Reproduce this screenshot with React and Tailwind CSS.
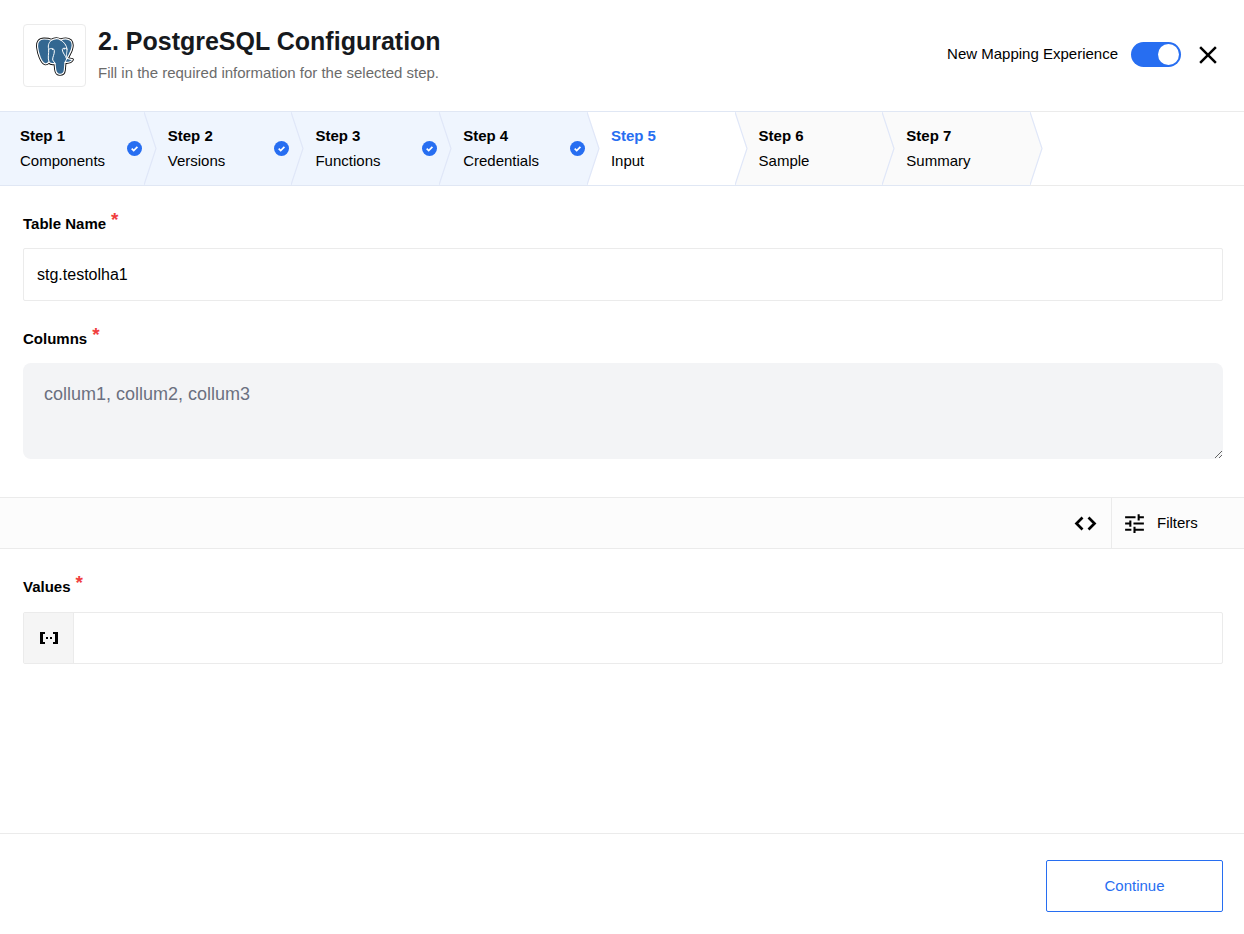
import React from "react";
import { MdClose, MdTune } from "react-icons/md";

const steps = [
  { title: "Step 1", name: "Components", state: "done" },
  { title: "Step 2", name: "Versions", state: "done" },
  { title: "Step 3", name: "Functions", state: "done" },
  { title: "Step 4", name: "Credentials", state: "done" },
  { title: "Step 5", name: "Input", state: "current" },
  { title: "Step 6", name: "Sample", state: "upcoming" },
  { title: "Step 7", name: "Summary", state: "upcoming" },
];

const stepStyles = {
  done: { box: "bg-[#eff5fe]", arrow: "fill-[#eff5fe]", title: "text-black" },
  current: { box: "bg-white", arrow: "fill-white", title: "text-[#276ef1]" },
  upcoming: { box: "bg-[#fafafa]", arrow: "fill-[#fafafa]", title: "text-black" },
};

const elephant =
  "M63 92C61 74 68 66 82 66C92 66 98 67 104 70C112 65 124 64 132 69C142 65 155 65 162 71C169 79 167 95 158 112L152 124C156 127 161 126 167 128C164 134 156 137 145 136L143 159C142 169 136 172 130 172C121 172 118 167 117 158L115 139C108 141 101 140 97 135C94 138 90 142 85 140C74 136 65 110 63 92Z";

function PostgresLogo() {
  return (
    <svg viewBox="55 57 120 120" className="size-10" aria-hidden="true">
      <path d={elephant} fill="none" stroke="#111" strokeWidth="9" strokeLinejoin="round" />
      <path d={elephant} fill="#336791" stroke="#fff" strokeWidth="3.500" strokeLinejoin="round" />
      <g fill="none" stroke="#fff" strokeWidth="3" strokeLinecap="round" strokeLinejoin="round">
        <path d="M104 70C94 78 94 88 96 98C97 110 92 122 97 135" />
        <path d="M96 97C104 92 112 94 113 101C114 112 107 120 108 129L115 139" />
        <path d="M132 69C142 74 150 86 151 96C152 106 146 112 152 124" />
        <path d="M151 96C144 92 137 93 137 98C137 107 147 116 150 126L145 136" />
      </g>
      <path d="M104 95l7 1-3 4zM139 95l7-1-3 4z" fill="#fff" />
    </svg>
  );
}

function CheckBadge() {
  return (
    <svg viewBox="0 0 15 15" className="size-[15px] shrink-0" aria-hidden="true">
      <circle cx="7.5" cy="7.5" r="7.5" fill="#276ef1" />
      <path d="M4.700 7.600l2 2 3.700-3.800" fill="none" stroke="#fff" strokeWidth="1.700" />
    </svg>
  );
}

function CodeIcon() {
  return (
    <svg viewBox="0 0 23 15" className="h-[15px] w-[23px]" aria-hidden="true">
      <path d="M8.500 1.500l-6 6 6 6M14.500 1.500l6 6-6 6" fill="none" stroke="#000" strokeWidth="2.700" />
    </svg>
  );
}

function Step({ title, name, state }) {
  const s = stepStyles[state];
  return (
    <li
      aria-current={state === "current" ? "step" : undefined}
      className={`relative flex min-w-0 flex-1 items-center justify-between border-y border-[#e0e7f4] pl-6 pr-[2px] ${s.box}`}
    >
      <div className="pb-[2px] leading-[25px]">
        <p className={`font-bold ${s.title}`}>{title}</p>
        <p>{name}</p>
      </div>
      {state === "done" && <CheckBadge />}
      <svg
        viewBox="0 0 13 73"
        preserveAspectRatio="none"
        className={`absolute left-full top-0 z-10 h-full w-[13px] ${s.arrow}`}
        aria-hidden="true"
      >
        <path d="M0 0L12 36.500L0 73" stroke="#e0e7f8" strokeWidth="1.200" />
      </svg>
    </li>
  );
}

function FieldLabel({ htmlFor, children }) {
  return (
    <label htmlFor={htmlFor} className="flex h-6 items-center gap-[5px] font-bold">
      {children}
      <span className="pb-2 text-[19px] leading-6 text-[#f03e3e]">*</span>
    </label>
  );
}

export default function App() {
  return (
    <div className="flex min-h-screen flex-col bg-white font-['Liberation_Sans',Arial,sans-serif] text-[15px] text-black">
      <header className="flex items-center justify-between pb-6 pl-[23px] pr-[21px] pt-6">
        <div className="flex items-center gap-3">
          <div className="flex size-[63px] items-center justify-center rounded-sm border border-[#ebebeb]">
            <PostgresLogo />
          </div>
          <div className="pb-[2px]">
            <h1 className="text-[25px] font-bold leading-8 text-[#16191d]">2. PostgreSQL Configuration</h1>
            <p className="mt-1 leading-6 text-[#6b6b6b]">Fill in the required information for the selected step.</p>
          </div>
        </div>
        <div className="flex items-center pb-[2px]">
          <label htmlFor="mapping">New Mapping Experience</label>
          <input
            id="mapping"
            type="checkbox"
            role="switch"
            defaultChecked
            className="ml-[13px] flex h-[25px] w-[50px] cursor-pointer appearance-none items-center rounded-full bg-[#c4c4c4] px-[2px] before:size-[21px] before:rounded-full before:bg-white checked:justify-end checked:bg-[#276ef1]"
          />
          <button type="button" aria-label="Close" className="ml-3">
            <MdClose size={30} className="block" />
          </button>
        </div>
      </header>

      <nav aria-label="Progress" className="flex h-[75px] overflow-hidden">
        <ol className="-ml-1 flex w-full max-w-[1034px]">
          {steps.map((step) => (
            <Step key={step.title} {...step} />
          ))}
        </ol>
        <div className="flex-1 border-y border-[#ebebeb]" />
      </nav>

      <main className="flex-1">
        <div className="pb-[38px] pl-[23px] pr-[21px] pt-[26px]">
          <FieldLabel htmlFor="table">Table Name</FieldLabel>
          <input
            id="table"
            type="text"
            defaultValue="stg.testolha1"
            className="mb-[26px] mt-3 block h-[53px] w-full rounded-xs border border-[#ebebeb] px-[13px] text-base"
          />
          <FieldLabel htmlFor="columns">Columns</FieldLabel>
          <textarea
            id="columns"
            defaultValue="collum1, collum2, collum3"
            className="mt-3 block h-24 w-full resize rounded-lg bg-[#f3f4f6] px-[21px] py-[17px] text-[18px] leading-7 text-[#6b7080]"
          />
        </div>

        <div className="flex h-[52px] justify-end border-y border-[#ebebeb] bg-[#fcfcfc]">
          <button type="button" aria-label="Code view" className="px-[14px]">
            <CodeIcon />
          </button>
          <button type="button" className="flex w-[133px] items-center gap-[10px] border-l border-[#ebebeb] pl-[10px]">
            <MdTune size={25} />
            Filters
          </button>
        </div>

        <div className="pb-6 pl-[23px] pr-[21px] pt-[26px]">
          <FieldLabel htmlFor="values">Values</FieldLabel>
          <div className="mt-[13px] flex h-[52px] rounded-xs border border-[#ebebeb]">
            <button
              type="button"
              aria-label="Insert variable"
              className="flex w-[50px] items-center justify-center border-r border-[#ebebeb] bg-[#f5f5f5]"
            >
              <svg viewBox="0 0 18 12" className="h-3 w-[18px]" aria-hidden="true">
                <path d="M0 0h5v2H3v8h2v2H0zM18 0h-5v2h2v8h-2v2h5z" />
                <path d="M6 5h2v2H6zM10 5h2v2h-2z" />
              </svg>
            </button>
            <input id="values" type="text" aria-label="Values" className="min-w-0 flex-1 px-[13px] text-base" />
          </div>
        </div>
      </main>

      <footer className="flex justify-end border-t border-[#ebebeb] pb-[22px] pr-[21px] pt-[26px]">
        <button type="button" className="h-[52px] w-[177px] rounded-xs border border-[#276ef1] text-[#276ef1]">
          Continue
        </button>
      </footer>
    </div>
  );
}
